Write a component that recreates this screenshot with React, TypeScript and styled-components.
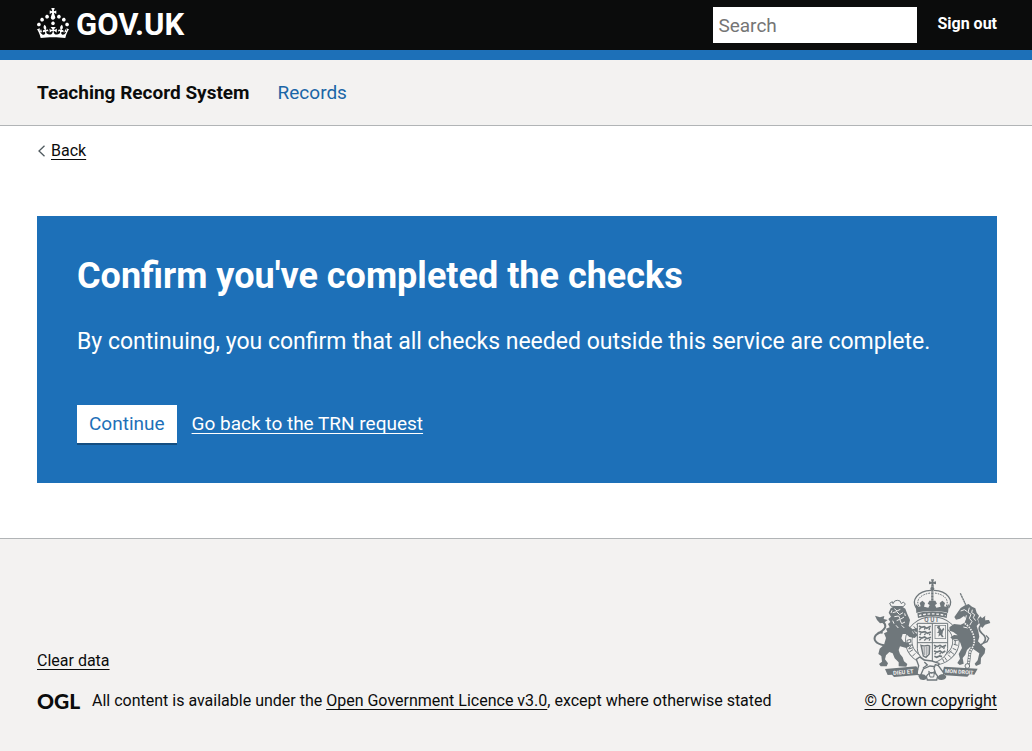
import React from 'react';
import styled, { createGlobalStyle } from 'styled-components';

const ink = '#0b0c0c';
const blue = '#1d70b8';
const paleGrey = '#f3f2f1';
const ruleGrey = '#b1b4b6';
const crestGrey = '#6f777b';

const GlobalStyle = createGlobalStyle`
  *, *::before, *::after { box-sizing: border-box; }
  body {
    margin: 0;
    color: ${ink};
    background: #fff;
    font-family: Roboto, "Liberation Sans", Arial, sans-serif;
    font-size: 16px;
    line-height: 20px;
  }
`;

const Page = styled.div`
  display: flex;
  flex-direction: column;
  min-height: 100vh;
`;

const Container = styled.div`
  width: 100%;
  max-width: 1032px;
  margin: 0 auto;
  padding: 0 35px 0 37px;
`;

const TextLink = styled.a<{ $inverse?: boolean }>`
  color: ${(p) => (p.$inverse ? '#fff' : ink)};
  text-decoration: underline;
  text-decoration-thickness: 1px;
  text-underline-offset: 3px;
  text-decoration-skip-ink: none;
`;

const Header = styled.header`
  background: ${ink};
  border-bottom: 10px solid ${blue};
`;

const HeaderRow = styled(Container)`
  display: flex;
  align-items: center;
  height: 50px;
`;

const Logo = styled.a`
  display: flex;
  align-items: center;
  gap: 7px;
  margin-right: auto;
  color: #fff;
  font-size: 31px;
  font-weight: 700;
  line-height: 30px;
  text-decoration: none;
`;

const CrownIcon = styled.svg`
  display: block;
  width: 32px;
  height: 30px;
  margin-bottom: 4px;
  fill: currentColor;
`;

const SearchInput = styled.input`
  width: 204px;
  height: 36px;
  padding: 0 5px;
  border: 0;
  border-radius: 0;
  background: #fff;
  color: ${ink};
  font: inherit;
  font-size: 19px;

  &::placeholder { color: #757575; opacity: 1; }
`;

const SignOut = styled.a`
  margin: 0 0 3px 20px;
  color: #fff;
  font-weight: 700;
  text-decoration: none;
`;

const ServiceBar = styled.div`
  background: ${paleGrey};
  border-bottom: 1px solid ${ruleGrey};
`;

const ServiceRow = styled(Container)`
  display: flex;
  align-items: center;
  gap: 28px;
  height: 65px;
  font-size: 19px;
  line-height: 25px;
`;

const ServiceName = styled.a`
  color: ${ink};
  font-weight: 700;
  text-decoration: none;
`;

const NavLink = styled.a`
  color: #1a65a6;
  text-decoration: none;
`;

const BackRow = styled.div`
  display: flex;
  align-items: center;
  gap: 5px;
  margin: 15px 0 55px;
`;

const Chevron = styled.svg`
  display: block;
  width: 9px;
  height: 12px;
  fill: none;
  stroke: #505a5f;
  stroke-width: 1.3;
`;

const Panel = styled.main`
  margin-bottom: 55px;
  padding: 40px;
  background: ${blue};
  color: #fff;
`;

const Title = styled.h1`
  margin: 0 0 31px;
  font-size: 36px;
  font-weight: 700;
  line-height: 40px;
`;

const Lead = styled.p`
  margin: 0 0 48px;
  font-size: 23px;
  line-height: 30px;
`;

const Actions = styled.div`
  display: flex;
  align-items: center;
  gap: 15px;
  font-size: 19px;
`;

const Button = styled.button`
  height: 38px;
  padding: 0 12px;
  border: 0;
  background: #fff;
  box-shadow: 0 2px 0 #144e81;
  color: ${blue};
  font: inherit;
`;

const Footer = styled.footer`
  flex: 1;
  padding: 40px 0;
  background: ${paleGrey};
  border-top: 1px solid ${ruleGrey};
`;

const FooterRow = styled(Container)`
  display: flex;
  align-items: flex-end;
  justify-content: space-between;
  gap: 30px;
`;

const FooterMeta = styled.div`
  display: flex;
  flex-direction: column;
  align-items: flex-start;
  gap: 20px;
`;

const Licence = styled.div`
  display: flex;
  align-items: center;
  gap: 13px;
`;

const OglMark = styled.span`
  width: 42px;
  font-family: Lato, Roboto, sans-serif;
  font-size: 21px;
  font-weight: 900;
`;

const Copyright = styled.div`
  display: flex;
  flex-direction: column;
  align-items: center;
  gap: 10px;
  white-space: nowrap;
`;

const CrestImage = styled.svg`
  display: block;
  width: 125px;
  height: 102px;
`;

const Crown = () => (
  <CrownIcon viewBox="0 0 32 30" aria-hidden="true">
    <path d="M22.6 10.4c-1 .4-2-.1-2.4-1-.4-.9.1-2 1-2.4.9-.4 2 .1 2.4 1s-.1 2-1 2.4m-5.9 6.7c-.9.4-2-.1-2.4-1-.4-.9.1-2 1-2.4.9-.4 2 .1 2.4 1s-.1 2-1 2.4m10.8-3.7c-1 .4-2-.1-2.4-1-.4-.9.1-2 1-2.4.9-.4 2 .1 2.4 1s0 2-1 2.4m3.3 4.8c-1 .4-2-.1-2.4-1-.4-.9.1-2 1-2.4.9-.4 2 .1 2.4 1s-.1 2-1 2.4M17 4.7l2.3 1.2V2.5l-2.3.7-.2-.2.9-3h-3.4l.9 3-.2.2c-.1.1-2.3-.7-2.3-.7v3.4L15 4.7c.1.1.1.2.2.2l-1.3 4c-.1.2-.1.4-.1.6 0 1.1.8 2 1.9 2.2h.7c1-.2 1.9-1.1 1.9-2.1 0-.2 0-.4-.1-.6l-1.3-4c-.1-.2 0-.2.1-.3m-7.6 5.7c.9.4 2-.1 2.4-1 .4-.9-.1-2-1-2.4-.9-.4-2 .1-2.4 1s0 2 1 2.4m-5 3c.9.4 2-.1 2.4-1 .4-.9-.1-2-1-2.4-.9-.4-2 .1-2.4 1s.1 2 1 2.4m-3.2 4.8c.9.4 2-.1 2.4-1 .4-.9-.1-2-1-2.4-.9-.4-2 .1-2.4 1s0 2 1 2.4m14.8 11c4.4 0 8.6.3 12.3.8 1.1-4.5 2.4-7 3.7-8.8l-2.5-.9c.2 1.3.3 1.9 0 2.7-.4-.4-.8-1.1-1.1-2.3l-1.2 4c.7-.5 1.3-.8 2-.9-1.1 2.5-2.6 3.1-3.5 3-1.1-.2-1.7-1.2-1.5-2.1.3-1.2 1.5-1.5 2.1-.1 1.1-2.3-.8-3-2-2.3 1.9-1.9 2.1-3.5.6-5.6-2.1 1.6-2.1 3.2-1.2 5.5-1.2-1.4-3.2-.6-2.5 1.6.9-1.4 2.1-.5 1.9.8-.2 1.1-1.7 2.1-3.5 1.9-2.7-.2-2.9-2.1-2.9-3.6.7-.1 1.9.5 2.9 1.9l.4-4.3c-1.1 1.1-2.1 1.4-3.2 1.4.4-1.2 2.1-3 2.1-3h-5.4s1.7 1.9 2.1 3c-1.1 0-2.1-.2-3.2-1.4l.4 4.3c1-1.4 2.2-2 2.9-1.9-.1 1.5-.2 3.4-2.9 3.6-1.9.2-3.4-.8-3.5-1.9-.2-1.3 1-2.2 1.9-.8.7-2.3-1.2-3-2.5-1.6.9-2.2.9-3.9-1.2-5.5-1.5 2-1.3 3.7.6 5.6-1.2-.7-3.1 0-2 2.3.6-1.4 1.8-1.1 2.1.1.2.9-.3 1.9-1.5 2.1-.9.2-2.4-.5-3.5-3 .6 0 1.2.3 2 .9l-1.2-4c-.3 1.1-.7 1.9-1.1 2.3-.3-.8-.2-1.4 0-2.7l-2.9.9C1.3 23 2.6 25.5 3.7 30c3.7-.5 7.9-.8 12.3-.8" />
  </CrownIcon>
);

const Crest = () => (
  <CrestImage viewBox="12 27 375 306" aria-hidden="true" fill={crestGrey} stroke="none">
    {/* crown */}
    <path d="M201 28h9l-2 8 8-2v9l-8-2 2 9h-9l2-9-8 2v-9l8 2z" />
    <circle cx="205" cy="56" r="6" />
    <g fill="none" stroke={crestGrey}>
      <path d="M157 114C141 91 160 63 201 61M254 114c16-23-3-51-44-53" strokeWidth="4" />
      <path d="M164 108c-9-18 5-35 36-39M247 108c9-18-5-35-36-39" strokeWidth="3" strokeDasharray="5 3" />
      <path d="M205 58v34" strokeWidth="7" strokeDasharray="7 2" />
    </g>
    <path d="M155 102l9 8 6-1-3-10 8-7 8 7-3 11 13 3 4-8-6-4 5-9h18l5 9-6 4 4 8 13-3-3-11 8-7 8 7-3 10 6 1 9-8-3 27c-24-8-71-8-95 0z" />
    <path d="M160 130c24-8 66-8 90 0l-2 14c-23-7-63-7-86 0z" />
    <path d="M165 137c22-7 58-7 80 0" fill="none" stroke={paleGrey} strokeWidth="4" strokeDasharray="8 5" />

    {/* garter */}
    <ellipse cx="205" cy="213" rx="71" ry="63" fill="none" stroke={crestGrey} strokeWidth="22" />
    <ellipse cx="205" cy="213" rx="71" ry="63" fill="none" stroke={paleGrey} strokeWidth="17" />
    <g fill="none" stroke={crestGrey} strokeWidth="3">
      <path d="M129 211l11-3v9l-11 2v-8M129 229l14-5-9 13 13-4M136 246l11-7M145 259l9-9" />
      <path d="M270 212l13-2M269 223l12 3M274 213l-1 12M266 235l11 5M260 245l10 8M252 254l9 9M262 242l-7 9M242 262l7 10M236 267l4 9" />
      <path d="M149 169l8 9M158 162l6 9" />
    </g>
    <text x="181" y="157" fontSize="19" fontWeight="700" fontFamily="Roboto, sans-serif">Q U I</text>

    {/* lion */}
    <path d="M82 109l-5-9 8-5 2 6 5-8 8-2 8 2 4 8 6-5 6 6-6 8z" fill="none" stroke={crestGrey} strokeWidth="3" />
    <path d="M80 115L92 108 112 109 124 116 130 132 138 150 134 168 146 178 158 174 162 182 155 188 162 195 152 204 136 201 126 192 116 192 112 205 119 215 135 220 137 229 127 234 108 229 104 240 108 252 116 262 120 274 130 282 127 290 104 289 104 277 92 265 86 250 76 246 66 256 63 268 72 280 68 289 50 289 45 282 54 275 52 258 43 252 47 236 60 224 66 204 60 190 70 185 66 176 77 172 72 162 79 156 73 147 81 140 74 128z" />
    <path d="M60 226c-24-5-34-17-25-30 8-10 27-12 29-27 1-12-10-13-18-22M56 188c-7-2-14 1-17 5" fill="none" stroke={crestGrey} strokeWidth="6" />
    <path d="M33 137l15 5 13-4-2 9 12 3-11 8-12 2-9-10z" />
    <g fill="none" stroke={paleGrey} strokeWidth="3">
      <path d="M91 116l8 7 10-5M86 128l12-3 9 9 10-6M91 140l13-2 5 10 11-7M98 152l9-4 6 13 10-5M113 166l8 8M84 121l-3 8M122 130l2 8M86 152l4 9M96 166l7 8" />
      <path d="M145 184l5 8M151 182l5 7" strokeWidth="2" />
    </g>

    {/* unicorn */}
    <path d="M289 70l16 34" fill="none" stroke={crestGrey} strokeWidth="4" strokeDasharray="7 1" />
    <path d="M303 106L314 102 324 110 334 115 338 128 345 137 340 148 345 160 338 168 343 184 346 200 342 214 352 224 364 236 362 250 351 264 350 282 336 288 332 281 341 271 346 250 332 240 319 230 309 240 304 254 296 264 299 281 287 285 280 279 288 266 284 252 294 234 289 218 280 207 266 209 259 202 270 195 281 196 268 186 257 182 256 172 270 162 290 164 302 158 306 146 300 138 288 146 276 149 271 141 280 128 290 114z" />
    <path d="M348 226c17-8 20-20 12-30-8-9-17-12-14-23 3-10 14-13 16-27" fill="none" stroke={crestGrey} strokeWidth="5" />
    <path d="M345 158l-3-11 8-8 4 6 10-8-2 14 13-1 4 9-16 5-8 10-6-7z" />
    <path d="M366 196l8 9-5 10-11 4" fill="none" stroke={crestGrey} strokeWidth="4" />
    <g fill="none" stroke={paleGrey} strokeWidth="3">
      <path d="M290 123l11-4 9 6M316 113l-4 14 9 6-5 12 8 9-7 12M325 119l-2 9 9 6-4 9 7 9M307 136l-3 13M298 171l14 3" />
    </g>
    <path d="M302 160c13 9 24 22 28 42s-5 30-12 43l-5 39" fill="none" stroke={crestGrey} strokeWidth="9" />
    <path d="M302 160c13 9 24 22 28 42s-5 30-12 43l-5 39" fill="none" stroke={paleGrey} strokeWidth="5" strokeDasharray="5 3" />
    <circle cx="310" cy="288" r="7" fill={paleGrey} stroke={crestGrey} strokeWidth="3" />

    {/* quartered shield */}
    <path d="M160 160h91v75c0 24-23 37-46 46-23-9-45-22-45-46z" fill={paleGrey} stroke={crestGrey} strokeWidth="3" />
    <path d="M205 160v116M160 218h91" fill="none" stroke={crestGrey} strokeWidth="3" />
    <rect x="213" y="166" width="32" height="40" fill="none" stroke={crestGrey} strokeWidth="2" />
    <path d="M219 173l5 5-1 7-5 2 7 3-2 10 6-5 5 7 5-1-4-7 2-10 4-6-3-5-5 7-6-8 2-5-8 1z" />
    <g fill="none" stroke={crestGrey} strokeWidth="5">
      <path d="M165 168l7 4 9-2 7 5 12-6M164 184l9 3 10-2 7 5 11-4M165 201l8 3 9-3 7 5 12-4" />
      <path d="M170 173l-4 6M184 173l-3 6M197 174l-2 6M171 190l-4 5M185 190l-4 5M198 191l-2 5M171 207l-5 4M185 207l-4 5M198 207l-3 5" strokeWidth="4" />
      <path d="M210 226l9 4 9-4 7 5 11-5M210 243l9 3 9-3 7 5 9-5M211 259l7 3 9-4 7 2" />
      <path d="M215 231l-3 6M229 231l-3 6M241 231l-2 6M216 248l-4 5M230 248l-3 5" strokeWidth="4" />
    </g>
    <path d="M171 226c12 5 20-4 26 2l-1 24-10 10-8-4z" fill="none" stroke={crestGrey} strokeWidth="4" />
    <path d="M177 230v22M182 230v26M187 229v28M192 229v23" stroke={crestGrey} strokeWidth="2" />

    {/* buckle and motto ribbon */}
    <path d="M157 268l10-7 13 9 24 3 21 7-4 11-23-3-20 9-8 19-13-4 7-25z" fill={paleGrey} stroke={crestGrey} strokeWidth="4" />
    <path d="M214 284l9 3 17 23-8 14-14-4-8-25zM181 276l9 9-13 9" fill={paleGrey} stroke={crestGrey} strokeWidth="4" />
    <path d="M63 297l94-8 6 9-2 17-71 6-6-7-13 1z" />
    <path d="M240 290l101 6-10 18-14-1-7 7-67-4-7-10z" />
    <path d="M163 318c7-8 20-7 24 2s-8 12-19 8zM223 319c6-8 19-8 24 1-2 10-17 12-26 7z" />
    <path d="M187 320c8-16 26-16 34-1l-3 11h-28z" fill={paleGrey} stroke={crestGrey} strokeWidth="4" />
    <path d="M194 304l9 6 9-6-3 17h-11z" fill="none" stroke={crestGrey} strokeWidth="3" />
    <g fill={paleGrey} fontSize="17" fontWeight="700" fontFamily="Roboto, sans-serif">
      <text x="88" y="315" transform="rotate(-5 88 315)">DIEU ET</text>
      <text x="242" y="308" fontSize="16" transform="rotate(4 242 308)">MON DROIT</text>
    </g>
  </CrestImage>
);

export default function App() {
  return (
    <>
      <GlobalStyle />
      <Page>
        <Header>
          <HeaderRow>
            <Logo href="#">
              <Crown />
              GOV.UK
            </Logo>
            <SearchInput type="search" placeholder="Search" aria-label="Search" />
            <SignOut href="#">Sign out</SignOut>
          </HeaderRow>
        </Header>
        <ServiceBar>
          <ServiceRow as="nav">
            <ServiceName href="#">Teaching Record System</ServiceName>
            <NavLink href="#">Records</NavLink>
          </ServiceRow>
        </ServiceBar>
        <Container>
          <BackRow>
            <Chevron viewBox="0 0 9 12" aria-hidden="true">
              <path d="M7.500 .8L2 6l5.500 5.200" />
            </Chevron>
            <TextLink href="#">Back</TextLink>
          </BackRow>
          <Panel>
            <Title>Confirm you've completed the checks</Title>
            <Lead>By continuing, you confirm that all checks needed outside this service are complete.</Lead>
            <Actions>
              <Button type="button">Continue</Button>
              <TextLink href="#" $inverse>Go back to the TRN request</TextLink>
            </Actions>
          </Panel>
        </Container>
        <Footer>
          <FooterRow>
            <FooterMeta>
              <TextLink href="#">Clear data</TextLink>
              <Licence>
                <OglMark>OGL</OglMark>
                <span>
                  All content is available under the <TextLink href="#">Open Government Licence v3.0</TextLink>, except where otherwise stated
                </span>
              </Licence>
            </FooterMeta>
            <Copyright>
              <Crest />
              <TextLink href="#">© Crown copyright</TextLink>
            </Copyright>
          </FooterRow>
        </Footer>
      </Page>
    </>
  );
}
